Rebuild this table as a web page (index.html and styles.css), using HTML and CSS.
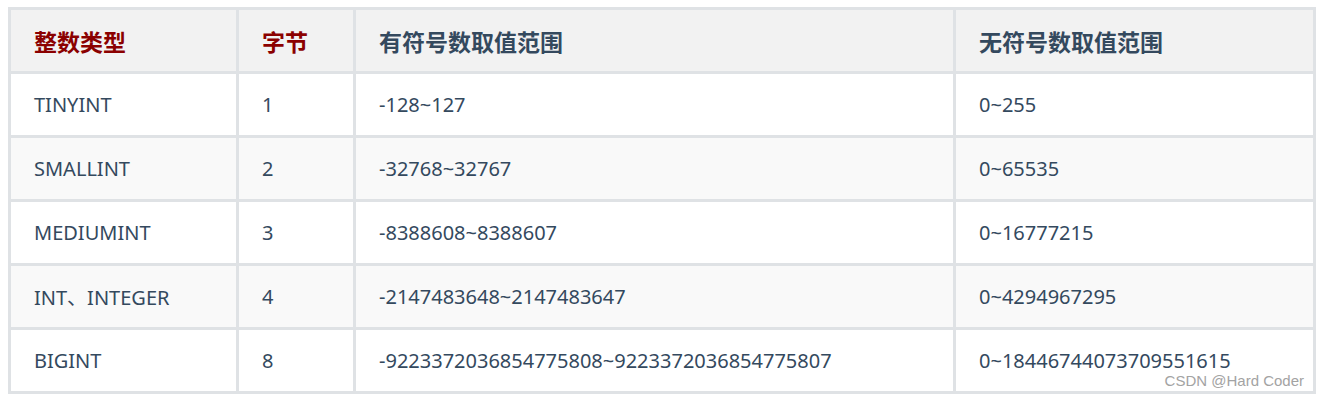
FILE: index.html
```html
<!DOCTYPE html>
<html lang="zh">
<head>
<meta charset="utf-8">
<title>整数类型</title>
<link rel="stylesheet" href="styles.css">
</head>
<body>
<div class="wrap">
<table class="types">
<colgroup>
<col class="c1"><col class="c2"><col class="c3"><col class="c4">
</colgroup>
<thead>
<tr>
<th class="red">整数类型</th>
<th class="red">字节</th>
<th>有符号数取值范围</th>
<th>无符号数取值范围</th>
</tr>
</thead>
<tbody>
<tr><td>TINYINT</td><td>1</td><td>-128~127</td><td>0~255</td></tr>
<tr><td>SMALLINT</td><td>2</td><td>-32768~32767</td><td>0~65535</td></tr>
<tr><td>MEDIUMINT</td><td>3</td><td>-8388608~8388607</td><td>0~16777215</td></tr>
<tr><td>INT、INTEGER</td><td>4</td><td>-2147483648~2147483647</td><td>0~4294967295</td></tr>
<tr><td>BIGINT</td><td>8</td><td>-9223372036854775808~9223372036854775807</td><td>0~18446744073709551615</td></tr>
</tbody>
</table>
<span class="watermark">CSDN @Hard Coder</span>
</div>
</body>
</html>
```
FILE: styles.css
```css
html, body {
  margin: 0;
  padding: 0;
  background: #ffffff;
}
body {
  padding: 7px 5px 0 8px;
}
.wrap {
  position: relative;
  width: 1308px;
}
.types {
  border-collapse: separate;
  border-spacing: 3px;
  background: #dfe2e5;
  table-layout: fixed;
  width: 1308px;
  font-family: "Noto Sans", "Noto Sans CJK SC", sans-serif;
  font-size: 20px;
  color: #34495e;
}
.c1 { width: 225px; }
.c2 { width: 114px; }
.c3 { width: 597px; }
.c4 { width: 357px; }
.types th, .types td {
  height: 61px;
  padding: 0 0 0 23px;
  text-align: left;
  vertical-align: middle;
  box-sizing: border-box;
  white-space: nowrap;
}
.types th {
  background: #f2f2f2;
  font-family: "Noto Sans CJK SC", sans-serif;
  font-weight: 700;
  font-size: 23px;
}
.types th.red {
  color: #8b0000;
}
.types tbody tr td {
  background: #ffffff;
}
.types tbody tr:nth-child(even) td {
  background: #f9f9f9;
}
.watermark {
  position: absolute;
  right: 12px;
  bottom: 5px;
  font-family: "Liberation Sans", Arial, sans-serif;
  font-size: 15px;
  color: #a3a3a3;
}
```
